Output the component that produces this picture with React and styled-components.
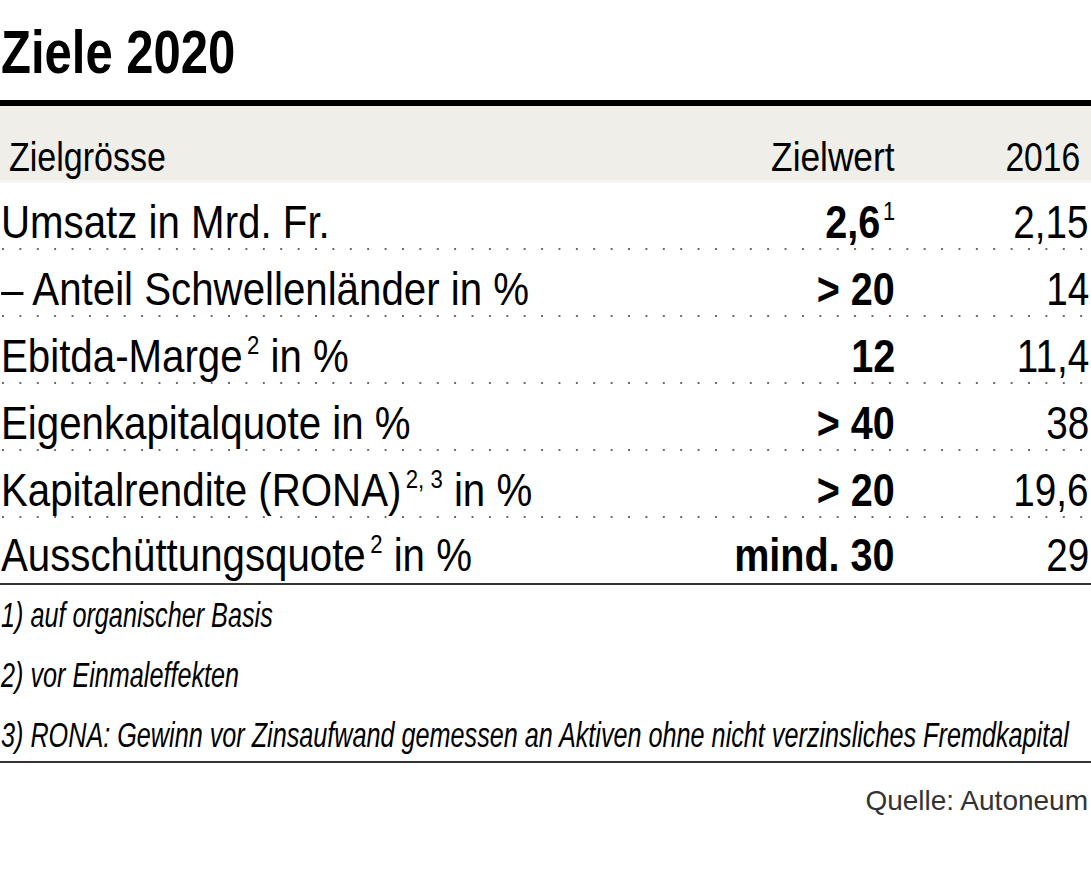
import React from "react";
import styled, { createGlobalStyle } from "styled-components";

const Global = createGlobalStyle`
  html, body {
    margin: 0;
    padding: 0;
    background: #fff;
  }
  body {
    font-family: "Liberation Sans", Arial, sans-serif;
    color: #000;
  }
`;

const rows = [
  { label: "Umsatz in Mrd. Fr.", target: "2,6", targetNote: "1", actual: "2,15" },
  { label: "– Anteil Schwellenländer in %", target: "> 20", actual: "14" },
  { label: "Ebitda-Marge", note: "2", suffix: "in %", target: "12", actual: "11,4" },
  { label: "Eigenkapitalquote in %", target: "> 40", actual: "38" },
  { label: "Kapitalrendite (RONA)", note: "2, 3", suffix: "in %", target: "> 20", actual: "19,6" },
  { label: "Ausschüttungsquote", note: "2", suffix: "in %", target: "mind. 30", actual: "29" },
];

const notes = [
  "1) auf organischer Basis",
  "2) vor Einmaleffekten",
  "3) RONA: Gewinn vor Zinsaufwand gemessen an Aktiven ohne nicht verzinsliches Fremdkapital",
];

export default function App() {
  return (
    <Page>
      <Global />
      <Title>
        <Narrow $x={0.79}>Ziele 2020</Narrow>
      </Title>
      <HeadRow>
        <HeadCell>
          <Narrow $x={0.83}>Zielgrösse</Narrow>
        </HeadCell>
        <HeadCell $right>
          <Narrow $x={0.86} $right>Zielwert</Narrow>
        </HeadCell>
        <HeadCell $right $pad>
          <Narrow $x={0.82} $right>2016</Narrow>
        </HeadCell>
      </HeadRow>
      {rows.map((r, i) => (
        <Row key={r.label} $last={i === rows.length - 1}>
          <Label>
            <Narrow $x={0.875}>
              {r.label}
              {r.note && <Sup>{r.note}</Sup>}
              {r.suffix && <> {r.suffix}</>}
            </Narrow>
          </Label>
          <Target>
            <Narrow $x={0.86} $right>
              {r.target}
              {r.targetNote && <Sup $tight>{r.targetNote}</Sup>}
            </Narrow>
          </Target>
          <Actual>
            <Narrow $x={0.84} $right>{r.actual}</Narrow>
          </Actual>
        </Row>
      ))}
      <Notes>
        {notes.map((n) => (
          <Note key={n}>
            <Narrow $x={0.72}>{n}</Narrow>
          </Note>
        ))}
      </Notes>
      <Source>Quelle: Autoneum</Source>
    </Page>
  );
}

const Page = styled.div`
  width: 1091px;
  overflow: hidden;
`;

/* condensed cut: the installed faces have no narrow width */
const Narrow = styled.span`
  display: inline-block;
  white-space: nowrap;
  transform: scaleX(${(p) => p.$x});
  transform-origin: ${(p) => (p.$right ? "right" : "left")} center;
`;

const Title = styled.h1`
  box-sizing: border-box;
  margin: 0;
  height: 106px;
  padding: 21px 0 0 1px;
  border-bottom: 6px solid #000;
  font-size: 62px;
  line-height: 1;
  font-weight: 700;
  white-space: nowrap;
`;

const grid = `
  display: grid;
  grid-template-columns: 1fr auto 194px;
  align-items: end;
  padding-right: 2px;
  white-space: nowrap;
`;

const HeadRow = styled.div`
  ${grid}
  box-sizing: border-box;
  height: 77px;
  padding-bottom: 2px;
  background: #efeee9;
  border-bottom: 3px solid #f6f5f2;
  font-size: 41px;
  line-height: 1;
`;

const HeadCell = styled.div`
  text-align: ${(p) => (p.$right ? "right" : "left")};
  padding-left: ${(p) => (p.$right ? "0" : "9px")};
  padding-right: ${(p) => (p.$pad ? "9px" : "0")};
`;

const Row = styled.div`
  ${grid}
  box-sizing: border-box;
  height: 67px;
  padding-bottom: 5px;
  font-size: 46px;
  line-height: 1;
  background-image: ${(p) =>
    p.$last ? "none" : "linear-gradient(to right, #6a6a6a 0 2px, transparent 2px)"};
  background-size: 17.4px 2px;
  background-repeat: repeat-x;
  background-position: 2px 100%;
  border-bottom: ${(p) => (p.$last ? "2px solid #333" : "0")};
`;

const Label = styled.div`
  padding-left: 1px;
`;

const Target = styled.div`
  font-weight: 700;
  text-align: right;
`;

const Actual = styled.div`
  text-align: right;
`;

const Sup = styled.span`
  font-size: 0.55em;
  font-weight: 400;
  vertical-align: 0.72em;
  line-height: 0;
  margin-left: ${(p) => (p.$tight ? "3px" : "5px")};
`;

const Notes = styled.div`
  box-sizing: border-box;
  height: 178px;
  border-bottom: 2px solid #333;
`;

const Note = styled.div`
  font-size: 35px;
  line-height: 60px;
  font-style: italic;
  white-space: nowrap;
  padding-left: 1px;
`;

const Source = styled.div`
  margin-top: 24px;
  padding-right: 3px;
  text-align: right;
  font-size: 28px;
  line-height: 1;
  color: #333;
`;
